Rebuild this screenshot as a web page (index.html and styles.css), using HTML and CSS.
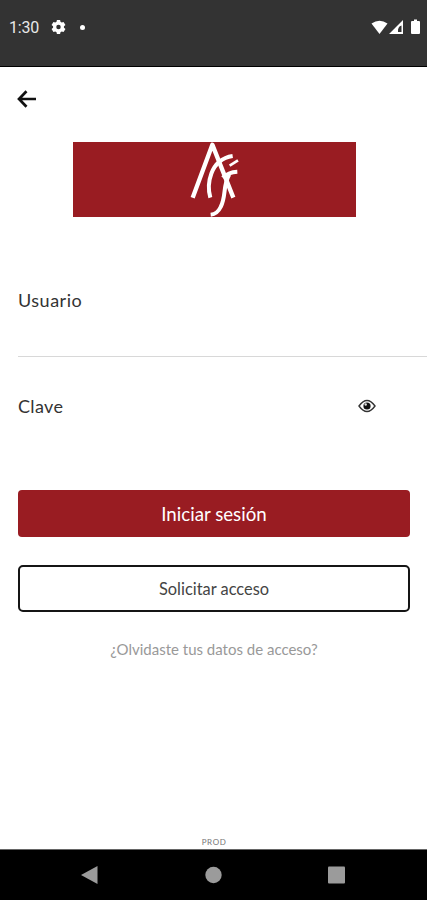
FILE: index.html
```
<!DOCTYPE html>
<html lang="es">
<head>
<meta charset="utf-8">
<title>Iniciar sesión</title>
<link rel="stylesheet" href="styles.css">
</head>
<body>
<header class="status">
  <span class="time">1:30</span>
  <svg class="gear" width="15" height="16" viewBox="0 0 16 16"><path fill="#fff" fill-rule="evenodd" d="M6.3 .5h3.400l.4 2 1.300.8 2-.7 2 3.200-1.600 1.300v1.800l1.600 1.300-2 3.200-2-.7-1.300.8-.4 2H6.300l-.4-2-1.300-.8-2 .7-2-3.200 1.600-1.300V7.100L.6 5.800l2-3.200 2 .7 1.300-.8zM8 5.600a2.400 2.400 0 1 0 0 4.800 2.400 2.400 0 0 0 0-4.800z"/></svg>
  <span class="dot"></span>
  <svg class="signals" width="50" height="17" viewBox="0 0 50 17"><path fill="#fff" d="M.5 4.500Q8.500-1 16.500 4.500L8.500 15z"/><path fill="#fff" fill-rule="evenodd" d="M32 1v14H18zM30.500 6.500q-4 1-3.500 6.500h3.500z"/><path fill="#fff" d="M41 2h2V.5h3V2h2q1 0 1 1v11q0 1-1 1h-7q-1 0-1-1V3q0-1 1-1z"/></svg>
</header>
<main class="screen">
  <svg class="back" width="20" height="18" viewBox="0 0 20 18"><path d="M10.500 1.200L3 9l7.500 7.800M3 9h17" fill="none" stroke="#111" stroke-width="2.700"/></svg>
  <div class="brand">
    <svg width="54" height="75" viewBox="24 21 162 225"><g fill="none" stroke="#fff"><path stroke-width="13" stroke-linejoin="round" d="M38 188L97 29L160 188"/><path stroke-width="12" d="M91 188C80 150 88 74 158 63"/><path stroke-width="8" d="M149 92L174 76"/><path stroke-width="12" d="M172 110C152 111 140 116 128 128M148 118C128 150 139 185 122 216Q112 237 92 239"/></g></svg>
  </div>
  <label class="field user">Usuario</label>
  <div class="field pass"><label>Clave</label>
    <svg class="eye" width="18" height="14" viewBox="0 0 18 14"><path d="M1 7Q9-4 17 7Q9 18 1 7z" fill="none" stroke="#333" stroke-width="1.400"/><circle cx="9" cy="7" r="3.600" fill="#111"/><circle cx="7.700" cy="5.500" r="1.200" fill="#ddd"/></svg>
  </div>
  <button class="btn primary">Iniciar sesión</button>
  <button class="btn outline">Solicitar acceso</button>
  <a class="forgot">¿Olvidaste tus datos de acceso?</a>
  <span class="env">PROD</span>
</main>
<nav class="nav">
  <svg width="17" height="18" viewBox="0 0 17 18"><path d="M0 9L16.500 0v18z"/></svg>
  <svg width="17" height="18" viewBox="0 0 17 18"><circle cx="8.500" cy="9" r="8.200"/></svg>
  <svg width="17" height="18" viewBox="0 0 17 18"><rect y=".5" width="17" height="17" rx="1"/></svg>
</nav>
</body>
</html>
```
FILE: styles.css
```
* { box-sizing: border-box; }
body {
  margin: 0;
  height: 900px;
  display: flex;
  flex-direction: column;
  overflow: hidden;
  background: #fff;
  font-family: Lato, sans-serif;
  color: #333;
}
svg { display: block; flex: none; }
.status {
  height: 67px;
  padding: 19px 6px 0 9px;
  display: flex;
  align-items: flex-start;
  background: #333;
  border-bottom: 1px solid #000;
}
.time { width: 42px; font: 16px/18px Roboto, sans-serif; letter-spacing: -0.2px; color: #e8e8e8; }
.dot { width: 5px; height: 5px; margin: 6px 0 0 14px; border-radius: 50%; background: #fff; }
.signals { margin-left: auto; }
.screen {
  flex: 1;
  display: flex;
  flex-direction: column;
  padding: 23px 17px 0 18px;
}
.back { margin-left: -2px; }
.brand {
  width: 283px;
  height: 75px;
  margin: 34px 0 0 55px;
  padding-left: 115px;
  background: #991c22;
}
.field { font-size: 18px; line-height: 24px; letter-spacing: 0.35px; }
.user {
  height: 69px;
  margin: 71px -17px 0 0;
  letter-spacing: 0.5px;
  border-bottom: 1px solid #d8d8d8;
}
.pass { display: flex; align-items: center; justify-content: space-between; margin-top: 37px; }
.eye { margin-right: 34px; }
.btn {
  height: 47px;
  padding: 0;
  border: 0;
  border-radius: 4px;
  font-family: inherit;
  text-align: center;
}
.primary { margin-top: 72px; background: #991c22; color: #fff; font-size: 18.7px; }
.outline { margin-top: 28px; background: #fff; border: 2px solid #151515; border-radius: 5px; color: #444; font-size: 16.4px; }
.forgot { margin-top: 27px; font-size: 15px; line-height: 20px; text-align: center; color: #999; }
.env { margin-top: auto; padding-bottom: 2px; font-size: 8px; line-height: 10px; letter-spacing: 0.6px; text-align: center; color: #777; }
.nav {
  height: 51px;
  padding: 0 82px 0 81px;
  display: flex;
  align-items: center;
  justify-content: space-between;
  background: #000;
  border-top: 1px solid #666;
}
.nav svg { fill: #9b9b9b; }
```
